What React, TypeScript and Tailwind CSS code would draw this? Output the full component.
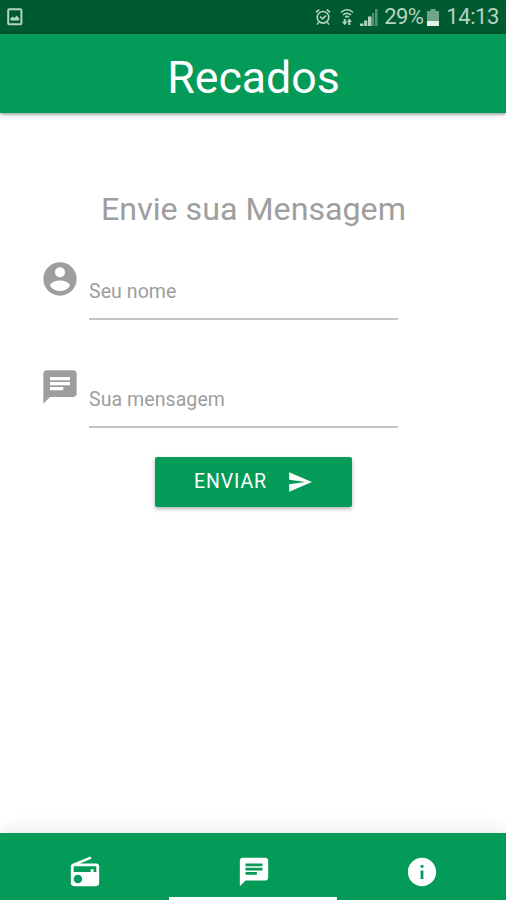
import type { ReactNode } from 'react';

function Icon({ d, className }: { d: string; className: string }) {
  return (
    <svg viewBox="0 0 24 24" fill="currentColor" className={className} aria-hidden="true">
      <path d={d} />
    </svg>
  );
}

const paths = {
  account:
    'M12 2C6.48 2 2 6.48 2 12s4.48 10 10 10 10-4.48 10-10S17.52 2 12 2zm0 3c1.66 0 3 1.34 3 3s-1.34 3-3 3-3-1.34-3-3 1.34-3 3-3zm0 14.2c-2.5 0-4.71-1.28-6-3.22.03-1.99 4-3.08 6-3.08 1.99 0 5.97 1.09 6 3.08-1.29 1.94-3.5 3.22-6 3.22z',
  chat: 'M20 2H4c-1.1 0-1.99.9-1.99 2L2 22l4-4h14c1.1 0 2-.9 2-2V4c0-1.1-.9-2-2-2zM6 9h12v2H6V9zm8 5H6v-2h8v2zm4-6H6V6h12v2z',
  send: 'M2.01 21L23 12 2.01 3 2 10l15 2-15 2z',
  radio:
    'M3.24 6.15C2.51 6.43 2 7.17 2 8v12c0 1.1.89 2 2 2h16c1.11 0 2-.9 2-2V8c0-1.11-.89-2-2-2H8.3l8.26-3.34L15.88 1 3.24 6.15zM7 20c-1.66 0-3-1.34-3-3s1.34-3 3-3 3 1.34 3 3-1.34 3-3 3zm13-8h-2v-2h-2v2H4V8h16v4z',
  info: 'M12 2C6.48 2 2 6.48 2 12s4.48 10 10 10 10-4.48 10-10S17.52 2 12 2zm1 15h-2v-6h2v6zm0-8h-2V7h2v2z',
};

function StatusBar() {
  return (
    <div className="flex h-[34px] items-center bg-[#005a30] px-[7px] text-[#b5d3c2]">
      <svg viewBox="0 0 16 18" className="h-[18px] w-4" fill="none" aria-hidden="true">
        <rect x="1.2" y="1.2" width="13.2" height="15" rx="1" stroke="currentColor" strokeWidth="2" />
        <path d="M3.5 12.5v-2l2-2 2 1.6 2.2-2.6 2.5 3v2z" fill="currentColor" />
      </svg>

      <div className="ml-auto flex items-center">
        {/* Alarm */}
        <svg viewBox="0 0 16 18" className="h-[18px] w-4" fill="none" stroke="currentColor" strokeWidth="1.6" aria-hidden="true">
          <circle cx="8" cy="9.3" r="5.8" />
          <path d="M1 4.4 4.2 1.6M15 4.4 11.8 1.6M3.6 14.4 2 16.6M12.4 14.4 14 16.6M5 8.6l2.6 2.2L11 7.6" />
        </svg>
        {/* Wi-Fi */}
        <svg viewBox="0 0 14 18" className="ml-[9px] h-[18px] w-3.5" fill="none" stroke="currentColor" strokeWidth="1.5" aria-hidden="true">
          <path d="M1 4.4c3.4-3.6 8.6-3.6 12 0M3 7c2.3-2.2 5.7-2.2 8 0M5.2 9.2c1-.9 2.6-.9 3.6 0" />
          <path d="M4.7 11v4M9.3 12.5V17" strokeWidth="2" />
          <path d="M2 13.8h5.4l-2.7 3.4zM6.6 13.8H12l-2.7-3.4z" fill="currentColor" stroke="none" />
        </svg>
        {/* Signal */}
        <svg viewBox="0 0 18 17" className="ml-[6px] h-[17px] w-[18px]" fill="currentColor" aria-hidden="true">
          <path d="M0 14.5h3.5V17H0zM4.2 11.5h3V17h-3zM8 7.5h3.500V17H8z" />
          <path d="M12 4h2.200v13H12zM15 0h2.600v17H15z" opacity=".45" />
        </svg>
        <span className="ml-[6px] text-[22px] leading-none tracking-[-0.6px]">29%</span>
        {/* Battery */}
        <svg viewBox="0 0 12 17" className="ml-[4px] h-[17px] w-3" aria-hidden="true">
          <path d="M3.5 0h5v2H12v10H0V2h3.5z" fill="#6fa487" />
          <path d="M0 12h12v5H0z" fill="#e4f3e9" />
        </svg>
        <span className="ml-[7px] text-[22px] leading-none tracking-[-0.4px]">14:13</span>
      </div>
    </div>
  );
}

function Field({ label, icon }: { label: string; icon: string }) {
  return (
    <label className="flex h-[108px]">
      <Icon d={icon} className="size-10 shrink-0" />
      <span className="ml-[9px] h-[61px] w-[309px] border-b-2 border-[#c4c4c4] pt-[21px] text-[19.5px] leading-[24px] tracking-[0.08px]">
        {label}
      </span>
    </label>
  );
}

function Tab({ active, children }: { active?: boolean; children: ReactNode }) {
  return (
    <a className={`flex flex-1 justify-center border-b-[3px] pt-[22px] pl-px ${active ? 'border-white' : 'border-transparent'}`}>
      {children}
    </a>
  );
}

export default function App() {
  return (
    <div className="flex h-[900px] w-[506px] flex-col overflow-hidden bg-white font-['Roboto',sans-serif]">
      <StatusBar />

      <header className="flex h-[79px] items-center justify-center bg-[#039b57] pt-[9px] pl-px shadow-[0_1px_4px_rgba(0,0,0,0.5)]">
        <h1 className="text-[44.7px] leading-none text-white">Recados</h1>
      </header>

      <main className="flex-1 text-[#9e9e9e]">
        <h2 className="mt-[76px] pl-px text-center text-[32.2px] leading-[40px]">Envie sua Mensagem</h2>

        <form className="mt-[30px] pl-10">
          <Field label="Seu nome" icon={paths.account} />
          <Field label="Sua mensagem" icon={paths.chat} />

          <button
            type="button"
            className="-mt-[18px] ml-[115px] flex h-[50px] w-[197px] items-center rounded-[2px] bg-[#039b57] pl-[39px] text-white shadow-[0_2px_4px_rgba(0,0,0,0.3)]"
          >
            <span className="text-[19.5px] tracking-[0.9px]">ENVIAR</span>
            <Icon d={paths.send} className="ml-[20px] size-[26px]" />
          </button>
        </form>
      </main>

      <nav className="flex h-[67px] bg-[#039b57] text-white shadow-[0_-2px_18px_rgba(0,0,0,0.1)]">
        <Tab>
          <Icon d={paths.radio} className="size-[34px]" />
        </Tab>
        <Tab active>
          <Icon d={paths.chat} className="size-[34px]" />
        </Tab>
        <Tab>
          <Icon d={paths.info} className="size-[34px]" />
        </Tab>
      </nav>
    </div>
  );
}
